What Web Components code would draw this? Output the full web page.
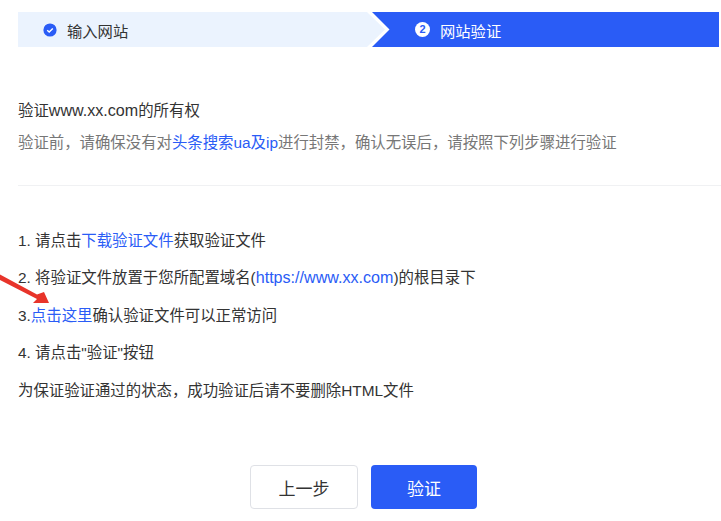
<!DOCTYPE html>
<html><head><meta charset="utf-8">
<style>
html,body{margin:0;padding:0;background:#fff;overflow:hidden}
body{width:721px;height:521px;position:relative;font-family:"Liberation Sans","Noto Sans CJK SC",sans-serif;color:#333}
</style></head><body>
<site-steps></site-steps>
<site-intro></site-intro>
<site-instructions></site-instructions>
<site-actions></site-actions>
<annot-arrow></annot-arrow>
<script>
function def(name,html){customElements.define(name,class extends HTMLElement{constructor(){super();this.attachShadow({mode:'open'}).innerHTML=html;}});}
def('site-steps',`<style>
:host{display:flex;height:35px;margin:12px 0 0 18px;width:701px;font-size:15.3px;position:relative}
.a{width:367px;flex:none;background:#ebf3fe;display:flex;align-items:center;padding-left:25px;gap:10px;color:#333;box-sizing:border-box;clip-path:polygon(0 0,349px 0,100% 50%,349px 100%,0 100%)}
.b{flex:1;margin-left:-13px;background:#2a5cf6;color:#fff;display:flex;align-items:center;padding-left:43px;gap:10px;clip-path:polygon(0 0,100% 0,100% 100%,0 100%,17.5px 50%)}
svg{display:block;flex:none}
.g{width:15px;height:15px}
</style>
<div class="a"><svg width="14" height="14" viewBox="0 0 14 14"><circle cx="7" cy="7" r="6.6" fill="#2a5cf6"/><path d="M4.2 7.2 6.2 9 9.8 5.4" fill="none" stroke="#fff" stroke-width="1.4"/></svg><span>输入网站</span></div>
<div class="b"><span class="g"><svg width="15" height="15" viewBox="0 0 15 15"><circle cx="7.5" cy="7.5" r="7.5" fill="#fff"/><text x="7.5" y="11.2" text-anchor="middle" font-size="11" font-weight="700" fill="#2a5cf6" font-family="Liberation Sans">2</text></svg></span><span>网站验证</span></div>`);
def('site-intro',`<style>
:host{display:block;margin:0 0 0 18px;height:139px;box-sizing:border-box;padding-top:54px;font-size:15.4px;border-bottom:1px solid #f0f1f3}
.t{color:#333;line-height:20px;height:20px}
.s{color:#777;line-height:20px;height:20px;margin-top:12px;white-space:nowrap}
a{color:#2a5cf6;text-decoration:none}
i{font-style:normal;font-size:16.1px;line-height:1}
</style><div class="t">验证<i>www.xx.com</i>的所有权</div><div class="s">验证前，请确保没有对<a>头条搜索ua及ip</a>进行封禁，确认无误后，请按照下列步骤进行验证</div>`);
def('site-instructions',`<style>
:host{display:flex;flex-direction:column;gap:17.5px;margin:44.5px 0 0 18px;font-size:15.4px;color:#333}
div{line-height:20px;height:20px;white-space:nowrap}
a{color:#2a5cf6;text-decoration:none}
i{font-style:normal;font-size:16.1px;line-height:1}
</style>
<div>1. 请点击<a>下载验证文件</a>获取验证文件</div>
<div>2. 将验证文件放置于您所配置域名(<a><i>https://www.xx.com</i></a>)的根目录下</div>
<div>3.<a>点击这里</a>确认验证文件可以正常访问</div>
<div>4. 请点击"验证"按钮</div>
<div>为保证验证通过的状态，成功验证后请不要删除HTML文件</div>`);
def('site-actions',`<style>
:host{display:flex;gap:13px;margin:64.5px 0 0 250px;font-size:17px}
div{box-sizing:border-box;height:44px;border-radius:4px;display:flex;align-items:center;justify-content:center}
.p{width:108px;background:#fff;border:1px solid #dfe1e6;color:#333}
.n{width:106px;background:#2a5cf6;color:#fff}
</style><div class="p">上一步</div><div class="n">验证</div>`);
def('annot-arrow',`<style>:host{position:absolute;left:0;top:270px;display:block;width:52px;height:36px}</style>
<svg width="52" height="36" viewBox="0 0 52 36"><path d="M0 4.5 37 24.5 44 22 49 33 33 33 37 29 0 10Z" fill="#e8342a"/></svg>`);
</script>
</body></html>
